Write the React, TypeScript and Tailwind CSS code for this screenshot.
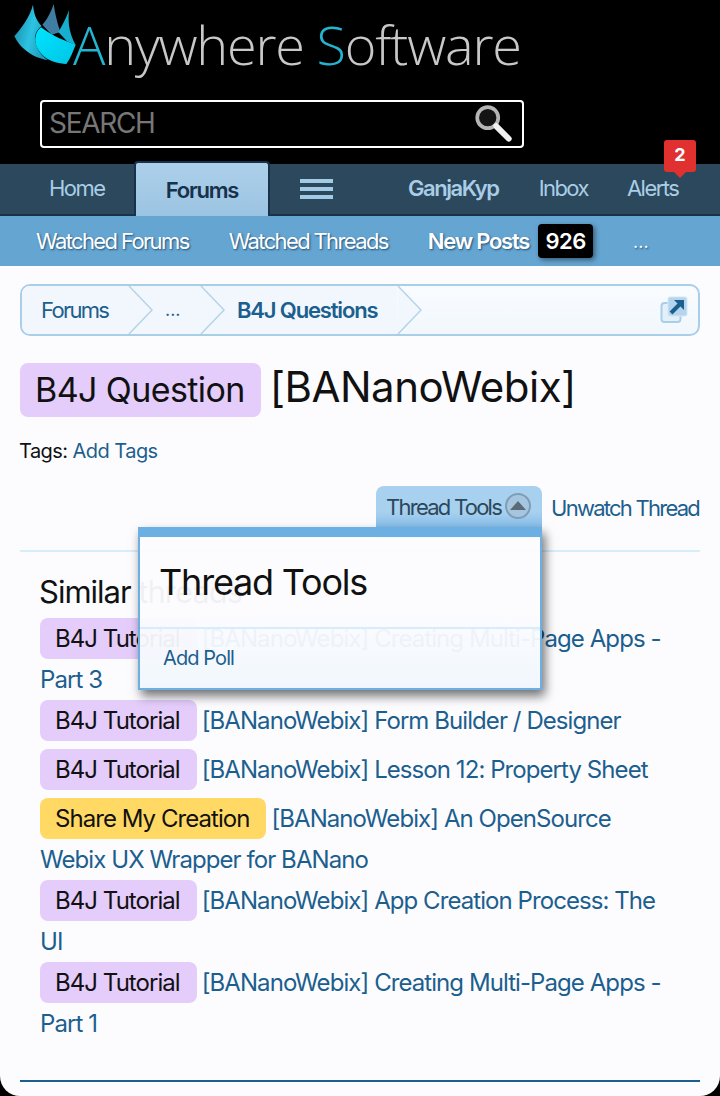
import React from "react";

const Prefix = ({ children, c = "bg-[#e4ccfb]" }: { children: React.ReactNode; c?: string }) => (
  <span className={`inline-block h-[41px] leading-[41px] my-[4px] pl-[15px] pr-[17px] mr-[5px] rounded-[8px] text-[#111] tracking-[-0.95px] ${c}`}>{children}</span>
);

const Row = ({ p, c, t }: { p: string; c?: string; t: string }) => (
  <div className="text-[24px] leading-[33px] text-[#1c5f8e] tracking-[-0.93px]">
    <Prefix c={c}>{p}</Prefix>
    <a>{t}</a>
  </div>
);

const Chevron = ({ fill = "none" }: { fill?: string }) => (
  <svg width="26" height="48" viewBox="0 0 26 48" className="shrink-0">
    <path d="M1 0 L24 24 L1 48" fill={fill} stroke="#b5d4ea" strokeWidth="1.5" />
  </svg>
);

const Logo = () => (
  <svg width="85" height="72" viewBox="0 0 255 216" className="shrink-0 blur-[0.5px]">
    <defs>
      <linearGradient id="a" x1="0" y1="0" x2="1" y2="0.4">
        <stop offset="0" stopColor="#17809c" />
        <stop offset="0.6" stopColor="#2cc4e4" />
        <stop offset="1" stopColor="#1f9dbb" />
      </linearGradient>
      <linearGradient id="b" x1="0" y1="0" x2="1" y2="1">
        <stop offset="0" stopColor="#00e4ff" />
        <stop offset="1" stopColor="#00c4e4" />
      </linearGradient>
    </defs>
    <path d="M146 12 C150 40 156 66 166 96 L140 104 L112 74 C126 60 138 36 146 12Z" fill="#3f7ea2" />
    <path d="M192 30 C190 60 188 90 212 136 L186 124 L160 96 C170 80 184 54 192 30Z" fill="#17aecf" />
    <path d="M84 14 C86 40 94 62 110 78 C92 92 86 110 92 130 C98 150 108 166 128 180 C90 176 44 146 28 108 C48 86 74 52 84 14Z" fill="url(#a)" />
    <path d="M108 82 C130 98 162 118 212 134 C204 154 196 176 184 192 C160 190 136 184 118 170 C98 154 86 128 92 108 C94 98 100 88 108 82Z" fill="url(#b)" />
  </svg>
);

export default function App() {
  return (
    <div className="w-[720px] h-[1096px] bg-black overflow-hidden font-['Inter',sans-serif]">
      <header className="h-[164px] flex flex-col">
        <div className="h-[100px] pl-[5px] flex items-start">
          <Logo />
          <div className="mt-[11px] -ml-[17px] text-[54px] leading-[66px] font-['Open_Sans',sans-serif] font-light text-[#c8c8c8] tracking-[-1.2px] whitespace-nowrap blur-[0.4px]">
            <span className="text-[#23b4d0]">A</span>nywhere <span className="text-[#23b4d0]">S</span>oftware
          </div>
        </div>
        <div className="ml-[40px] w-[484px] h-[48px] border-2 border-white rounded-[4px] flex items-center justify-between pl-[7px] pr-[9px]">
          <span className="text-[28px] leading-[40px] -mt-[3px] text-[#777] tracking-[-1.3px]">SEARCH</span>
          <svg width="40" height="40" viewBox="0 0 38 38" className="blur-[0.5px]">
            <circle cx="14" cy="13" r="10" fill="#141414" stroke="#b5b5b5" strokeWidth="3.5" />
            <path d="M22 21 L34 33" stroke="#f2f2f2" strokeWidth="5.5" strokeLinecap="round" />
          </svg>
        </div>
      </header>

      <nav className="relative h-[52px] bg-[#2b485c] border-b-2 border-[#17324a] flex items-start text-[22px] tracking-[-1.55px] text-[#a9cde6]">
        <a className="h-[48px] w-[134px] pl-[49px] leading-[48px]">Home</a>
        <a className="h-[55px] -mt-[3px] w-[136px] text-center leading-[54px] font-semibold tracking-[-1.2px] text-[#16324d] rounded-t-[4px] border-x-2 border-t-2 border-[#17324a] bg-gradient-to-b from-[#add0ea] to-[#9bc4e2] -mb-[2px]">Forums</a>
        <span className="h-[50px] ml-[30px] w-[33px] flex flex-col justify-center gap-[4px]">
          <i className="block h-[4px] bg-[#a3cbe6]" />
          <i className="block h-[4px] bg-[#a3cbe6]" />
          <i className="block h-[4px] bg-[#a3cbe6]" />
        </span>
        <a className="h-[48px] ml-[75px] leading-[48px] font-semibold tracking-[-1.45px]">GanjaKyp</a>
        <a className="h-[48px] ml-[40px] leading-[48px]">Inbox</a>
        <a className="h-[48px] ml-[39px] leading-[48px]">Alerts</a>
        <span className="absolute left-[664px] -top-[24px] w-[32px] h-[32px] bg-[#e03030] rounded-[3px] text-white text-[18px] font-bold text-center leading-[30px] tracking-normal">
          2
          <i className="absolute left-[10px] top-[32px] w-0 h-0 border-x-[6px] border-x-transparent border-t-[6px] border-t-[#e03030]" />
        </span>
      </nav>

      <div className="h-[50px] bg-[#65a5d1] flex items-center text-[22px] tracking-[-1.63px] text-white [text-shadow:1px_1px_2px_#1f4f75]">
        <a className="ml-[36px]">Watched Forums</a>
        <a className="ml-[40px]">Watched Threads</a>
        <a className="ml-[40px] font-semibold tracking-[-1.25px]">New Posts</a>
        <span className="ml-[9px] w-[55px] h-[34px] rounded-[4px] bg-black text-center leading-[34px] font-semibold [text-shadow:none] tracking-[-0.6px] shadow-[2px_2px_5px_rgba(0,0,0,0.45)]">926</span>
        <span className="ml-[40px] text-[18px] tracking-normal">...</span>
      </div>

      <main className="relative h-[830px] bg-[#fcfcff] rounded-b-[20px] px-[20px] pt-[18px]">
        <div className="h-[52px] border-2 border-[#a9cfe8] rounded-[10px] bg-gradient-to-b from-[#f9fcff] to-[#f1f7fc] flex items-center text-[22px] tracking-[-1.7px] text-[#1c5f8e] overflow-hidden">
          <div className="h-full flex items-center">
            <div className="h-full flex items-center bg-[#f1f7fc] leading-[46px]">
              <a className="pl-[19px] w-[106px]">Forums</a>
              <Chevron />
              <a className="w-[46px] pl-[11px] text-[18px] tracking-normal">...</a>
              <Chevron />
              <a className="pl-[11px] w-[171px] font-semibold tracking-[-1.16px]">B4J Questions</a>
            </div>
            <Chevron fill="#f1f7fc" />
          </div>
          <svg width="28" height="28" viewBox="0 0 28 28" className="ml-auto mr-[10px]">
            <rect x="1.5" y="7" width="19" height="19" rx="3" fill="#e3f0f9" stroke="#a9cfe8" strokeWidth="2" />
            <rect x="8" y="1" width="19" height="19" rx="2" fill="#b4d5ed" stroke="#d4e7f5" />
            <path d="M11 17 L20 8" stroke="#1c5f8e" strokeWidth="4" />
            <path d="M14 4 H24 V14 Z" fill="#1c5f8e" />
          </svg>
        </div>

        <div className="mt-[27px] flex items-center h-[54px]">
          <span className="h-[54px] leading-[54px] pl-[15px] pr-[16px] rounded-[8px] bg-[#e4ccfb] text-[34px] tracking-[-0.6px] text-[#111]">B4J Question</span>
          <span className="ml-[9px] text-[42px] tracking-[-0.5px] text-[#111] -mt-[8px]">[BANanoWebix]</span>
        </div>

        <div className="mt-[20px] -ml-px text-[20px] leading-[28px] tracking-[-0.55px] text-[#111]">
          Tags: <a className="text-[#1c5f8e]">Add Tags</a>
        </div>

        <div className="mt-[21px] h-[52px] flex justify-end text-[22px] tracking-[-1.75px] text-[#1c5f8e]">
          <div className="w-[166px] h-[52px] rounded-t-[8px] bg-gradient-to-b from-[#a8d0ef] via-[#a8d0ef] to-[#6cb0e3] pl-[10px] pt-[6px] flex items-start text-[#2b485c] leading-[30px] whitespace-nowrap">
            Thread Tools
            <svg width="26" height="26" viewBox="0 0 26 26" className="ml-[4px] mt-[1px] shrink-0">
              <circle cx="13" cy="13" r="12" fill="#a6c6df" stroke="#7f9db6" strokeWidth="2" />
              <path d="M5 17 L13 8 L21 17 Z" fill="#5b6a76" />
            </svg>
          </div>
          <a className="ml-[9px] mr-px leading-[44px]">Unwatch Thread</a>
        </div>

        <div className="h-[2px] mt-[12px] bg-[#d7edfc]" />

        <div className="px-[20px] pt-[20px]">
          <h3 className="-ml-px text-[31px] leading-[40px] tracking-[-1px] text-[#111] mb-[2px]">Similar threads</h3>
          <Row p="B4J Tutorial" t="[BANanoWebix] Creating Multi-Page Apps - Part 3" />
          <Row p="B4J Tutorial" t="[BANanoWebix] Form Builder / Designer" />
          <Row p="B4J Tutorial" t="[BANanoWebix] Lesson 12: Property Sheet" />
          <Row p="Share My Creation" c="bg-[#ffd964]" t="[BANanoWebix] An OpenSource Webix UX Wrapper for BANano" />
          <Row p="B4J Tutorial" t="[BANanoWebix] App Creation Process: The UI" />
          <Row p="B4J Tutorial" t="[BANanoWebix] Creating Multi-Page Apps - Part 1" />
        </div>
        <div className="h-[2px] mt-[40px] bg-[#1c5f8e]" />

        <div className="absolute left-[138px] top-[261px] w-[404px] h-[163px] border-2 border-t-[10px] border-[#6cb0e3] bg-gradient-to-b from-[#fcfcff]/95 via-[#fcfcff]/95 to-[#f0f7fc]/95 shadow-[3px_6px_10px_rgba(0,0,0,0.55)]">
          <div className="h-[90px] pl-[19px] pt-[23px] text-[36px] leading-[44px] tracking-[-1.2px] text-[#111]">Thread Tools</div>
          <div className="h-[2px] bg-[#d7edfc]" />
          <a className="block pl-[23px] pt-[16px] text-[20px] leading-[26px] tracking-[-0.9px] text-[#1c5f8e]">Add Poll</a>
        </div>
      </main>
    </div>
  );
}
